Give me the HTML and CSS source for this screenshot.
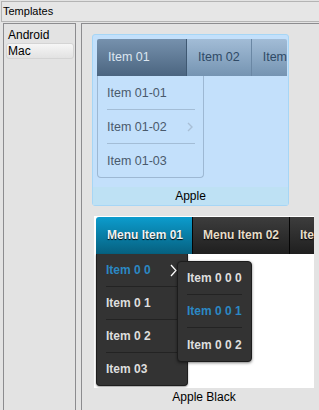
FILE: index.html
```html
<!DOCTYPE html>
<html lang="en">
<head>
    <meta charset="UTF-8">
    <meta name="viewport" content="width=device-width, initial-scale=1.0">
    <title>Templates</title>
    <link rel="stylesheet" href="styles.css">
</head>
<body>

    <div class="header">Templates</div>

    <div class="main">
        <div class="template-list">
            <div class="template-item">Android</div>
            <div class="template-item selected">Mac</div>
        </div>

        <div class="preview-area">

            <!-- Apple skin (selected) -->
            <div class="skin skin-apple">
                <div class="skin-body">
                    <div class="apple-bar">
                        <div class="apple-tab first active">Item 01</div>
                        <div class="apple-tab">Item 02</div>
                        <div class="apple-tab">Item 03</div>
                    </div>
                    <div class="apple-menu">
                        <div class="apple-menu-item">Item 01-01</div>
                        <div class="apple-menu-item">
                            <span>Item 01-02</span>
                            <svg width="6" height="10" viewBox="0 0 6 10"><polyline points="1,1 5,5 1,9" fill="none" stroke="#a9bfd6" stroke-width="1.4"/></svg>
                        </div>
                        <div class="apple-menu-item last">Item 01-03</div>
                    </div>
                </div>
                <div class="skin-label">Apple</div>
            </div>

            <!-- Apple Black skin -->
            <div class="skin skin-black">
                <div class="black-body">
                    <div class="black-bar">
                        <div class="black-tab active">Menu Item 01</div>
                        <div class="black-tab">Menu Item 02</div>
                        <div class="black-tab">Item 03</div>
                    </div>
                    <div class="black-menu">
                        <div class="black-menu-item current">
                            <span>Item 0 0</span>
                            <svg width="7" height="13" viewBox="0 0 7 13"><polyline points="1,1 6,6.5 1,12" fill="none" stroke="#ffffff" stroke-width="1.3"/></svg>
                        </div>
                        <div class="black-menu-item">Item 0 1</div>
                        <div class="black-menu-item">Item 0 2</div>
                        <div class="black-menu-item last">Item 03</div>

                        <div class="black-submenu">
                            <div class="black-menu-item">Item 0 0 0</div>
                            <div class="black-menu-item current">Item 0 0 1</div>
                            <div class="black-menu-item last">Item 0 0 2</div>
                        </div>
                    </div>
                </div>
                <div class="black-label">Apple Black</div>
            </div>

        </div>
    </div>

</body>
</html>
```

FILE: styles.css
```css
body {
    margin: 0;
    padding: 0;
    background: #e3e3e3;
    font-family: "Liberation Sans", Arial, sans-serif;
    width: 319px;
    height: 410px;
    overflow: hidden;
}

.header {
    margin: 1px 0 0 1px;
    height: 21px;
    box-sizing: border-box;
    border: 1px solid #b4b4b4;
    border-right: none;
    background: #e6e6e6;
    font-size: 11px;
    line-height: 19px;
    padding-left: 1px;
    color: #000;
}

.main {
    display: flex;
    margin-top: 1px;
    height: 387px;
}

.template-list {
    margin-left: 3px;
    width: 73px;
    box-sizing: border-box;
    border: 1px solid #8c8c8f;
    border-bottom: none;
    padding: 3px 1px 0 2px;
}

.template-item {
    height: 16px;
    box-sizing: border-box;
    border: 1px solid transparent;
    border-radius: 3px;
    padding: 0 1px;
    font-size: 12px;
    line-height: 14px;
    color: #000;
}

.template-item.selected {
    border-color: #d4d4d4;
    background: linear-gradient(#f6f6f6, #e2e2e2);
}

.preview-area {
    flex: 1;
    margin-left: 5px;
    border-left: 1px solid #8c8c8f;
    border-top: 1px solid #8c8c8f;
    padding: 10px 0 0 10px;
    overflow: hidden;
}

/* Apple */

.skin-apple {
    width: 197px;
    box-sizing: border-box;
    border: 1px solid #a6d6f6;
    border-radius: 3px;
    background: #c3e0fb;
}

.skin-body {
    height: 152px;
    padding: 4px 1px 0 4px;
    box-sizing: border-box;
}

.apple-bar {
    display: flex;
    height: 37px;
    overflow: hidden;
    white-space: nowrap;
    border-radius: 2px 2px 0 0;
}

.apple-tab {
    padding: 0 11px;
    font-size: 12.5px;
    line-height: 37px;
    color: #2f4a66;
    background: linear-gradient(#a2bcd6, #7594b2);
    border-right: 1px solid #6a87a4;
}

.apple-tab.first {
    width: 90px;
    box-sizing: border-box;
    flex-shrink: 0;
}

.apple-tab.active {
    color: #dce6f0;
    background: linear-gradient(#7691ad, #4b6580);
    border-right-color: #3f5872;
}

.apple-menu {
    width: 107px;
    box-sizing: border-box;
    border: 1px solid #9db8d3;
    border-top: none;
    border-radius: 0 0 4px 4px;
}

.apple-menu-item {
    display: flex;
    justify-content: space-between;
    align-items: center;
    height: 34px;
    box-sizing: border-box;
    margin: 0 8px 0 9px;
    padding-right: 2px;
    border-bottom: 1px solid #a3bdd6;
    font-size: 12.5px;
    color: #4a5a6c;
}

.apple-menu-item.last {
    border-bottom: none;
    height: 33px;
}

.skin-label {
    height: 18px;
    background: #bee1f4;
    font-size: 12px;
    line-height: 18px;
    text-align: center;
    color: #000;
}

/* Apple Black */

.skin-black {
    margin: 10px 0 0 2px;
    width: 220px;
}

.black-body {
    height: 172px;
    background: #fff;
    padding: 1px 0 0 2px;
    box-sizing: border-box;
    overflow: hidden;
}

.black-bar {
    display: flex;
    height: 37px;
    white-space: nowrap;
    border-radius: 3px 0 0 0;
    overflow: hidden;
}

.black-tab {
    width: 97px;
    flex-shrink: 0;
    box-sizing: border-box;
    padding-left: 10px;
    font-size: 12px;
    font-weight: bold;
    line-height: 37px;
    color: #e6dcc8;
    text-shadow: 0 1px 1px #000;
    background: linear-gradient(#3d3d3d, #1f1f1f);
    border-right: 1px solid #050505;
}

.black-tab.active {
    padding-left: 11px;
    color: #eef4f6;
    background: linear-gradient(#0c9ccd, #06607f);
}

.black-menu {
    position: relative;
    width: 92px;
    box-sizing: border-box;
    background: #333;
    border: 1px solid #1e1e1e;
    border-top: none;
    border-radius: 0 0 4px 4px;
    box-shadow: 0 1px 2px rgba(0, 0, 0, 0.4);
}

.black-menu-item {
    display: flex;
    justify-content: space-between;
    align-items: center;
    height: 33px;
    box-sizing: border-box;
    margin: 0 10px 0 9px;
    border-bottom: 1px solid #232323;
    font-size: 12px;
    font-weight: bold;
    color: #dedede;
}

.black-menu-item.last {
    border-bottom: none;
    height: 32px;
}

.black-menu-item.current {
    color: #2b88c4;
}

.black-submenu {
    position: absolute;
    left: 80px;
    top: 7px;
    width: 75px;
    box-sizing: border-box;
    background: #333;
    border: 1px solid #1c1c1c;
    border-radius: 4px;
    box-shadow: 0 1px 3px rgba(0, 0, 0, 0.5);
}

.black-submenu .black-menu-item {
    margin: 0 9px 0 9px;
}

.black-submenu .black-menu-item.last {
    height: 33px;
}

.black-label {
    height: 18px;
    font-size: 12px;
    line-height: 18px;
    text-align: center;
    color: #000;
}
```
